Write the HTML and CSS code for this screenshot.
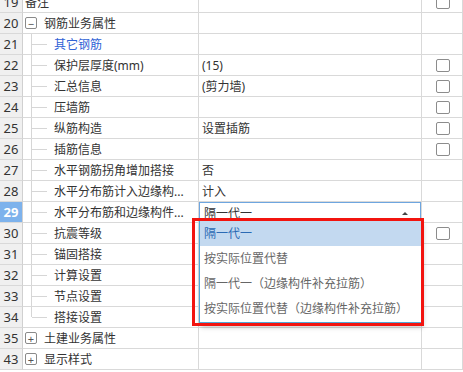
FILE: index.html
```html
<!DOCTYPE html>
<html lang="zh-CN">
<head>
    <meta charset="UTF-8">
    <title>属性编辑</title>
    <link rel="stylesheet" href="styles.css">
</head>
<body>
    <div class="grid">
        <div class="row">
            <div class="num">19</div>
            <div class="name top">备注</div>
            <div class="val"></div>
            <div class="chk"><span class="box"></span></div>
        </div>
        <div class="row">
            <div class="num">20</div>
            <div class="name top"><span class="toggle">&minus;</span>钢筋业务属性</div>
            <div class="val"></div>
            <div class="chk"></div>
        </div>
        <div class="row">
            <div class="num">21</div>
            <div class="name child link">其它钢筋</div>
            <div class="val"></div>
            <div class="chk"></div>
        </div>
        <div class="row">
            <div class="num">22</div>
            <div class="name child">保护层厚度(mm)</div>
            <div class="val">(15)</div>
            <div class="chk"><span class="box"></span></div>
        </div>
        <div class="row">
            <div class="num">23</div>
            <div class="name child">汇总信息</div>
            <div class="val">(剪力墙)</div>
            <div class="chk"><span class="box"></span></div>
        </div>
        <div class="row">
            <div class="num">24</div>
            <div class="name child">压墙筋</div>
            <div class="val"></div>
            <div class="chk"><span class="box"></span></div>
        </div>
        <div class="row">
            <div class="num">25</div>
            <div class="name child">纵筋构造</div>
            <div class="val">设置插筋</div>
            <div class="chk"><span class="box"></span></div>
        </div>
        <div class="row">
            <div class="num">26</div>
            <div class="name child">插筋信息</div>
            <div class="val"></div>
            <div class="chk"><span class="box"></span></div>
        </div>
        <div class="row">
            <div class="num">27</div>
            <div class="name child">水平钢筋拐角增加搭接</div>
            <div class="val">否</div>
            <div class="chk"></div>
        </div>
        <div class="row">
            <div class="num">28</div>
            <div class="name child">水平分布筋计入边缘构...</div>
            <div class="val">计入</div>
            <div class="chk"></div>
        </div>
        <div class="row">
            <div class="num current">29</div>
            <div class="name child">水平分布筋和边缘构件...</div>
            <div class="val editing">
                <div class="combo">隔一代一<span class="arrow"></span></div>
            </div>
            <div class="chk"></div>
        </div>
        <div class="row">
            <div class="num">30</div>
            <div class="name child">抗震等级</div>
            <div class="val"></div>
            <div class="chk"><span class="box"></span></div>
        </div>
        <div class="row">
            <div class="num">31</div>
            <div class="name child">锚固搭接</div>
            <div class="val"></div>
            <div class="chk"></div>
        </div>
        <div class="row">
            <div class="num">32</div>
            <div class="name child">计算设置</div>
            <div class="val"></div>
            <div class="chk"></div>
        </div>
        <div class="row">
            <div class="num">33</div>
            <div class="name child">节点设置</div>
            <div class="val"></div>
            <div class="chk"></div>
        </div>
        <div class="row">
            <div class="num">34</div>
            <div class="name child last">搭接设置</div>
            <div class="val"></div>
            <div class="chk"></div>
        </div>
        <div class="row">
            <div class="num">35</div>
            <div class="name top"><span class="toggle">+</span>土建业务属性</div>
            <div class="val"></div>
            <div class="chk"></div>
        </div>
        <div class="row">
            <div class="num">43</div>
            <div class="name top"><span class="toggle">+</span>显示样式</div>
            <div class="val"></div>
            <div class="chk"></div>
        </div>

        <!-- open dropdown of row 29 -->
        <ul class="dropdown">
            <li class="selected">隔一代一</li>
            <li>按实际位置代替</li>
            <li>隔一代一（边缘构件补充拉筋）</li>
            <li>按实际位置代替（边缘构件补充拉筋）</li>
        </ul>
        <div class="mark"></div>
    </div>
</body>
</html>
```

FILE: styles.css
```css
body {
    margin: 0;
    padding: 0;
    background-color: #ffffff;
    font-family: "Noto Sans", "Noto Sans CJK SC", sans-serif;
    font-size: 12px;
    color: #333;
    overflow: hidden;
}

.grid {
    position: relative;
    margin-top: -8px;
    width: 463px;
}

.row {
    display: grid;
    grid-template-columns: 23px 176px 223px 41px;
    height: 21px;
}

.row > div {
    box-sizing: border-box;
    border-right: 1px solid #d9d9d9;
    border-bottom: 1px solid #d9d9d9;
    display: flex;
    align-items: center;
    white-space: nowrap;
    overflow: hidden;
}

.num {
    justify-content: center;
    background-color: #f0f0f0;
    font-size: 13px;
    color: #333;
    border-right-color: #d0d0d0 !important;
}

.num.current {
    background-color: #7db2ec;
    color: #ffffff;
    font-weight: bold;
}

.name.top {
    padding-left: 2px;
}

.toggle {
    box-sizing: border-box;
    width: 12px;
    height: 12px;
    margin-right: 7px;
    border: 1px solid #8a8a8a;
    border-radius: 2px;
    display: flex;
    align-items: center;
    justify-content: center;
    font-size: 11px;
    line-height: 1;
    color: #555;
}

.name.child {
    position: relative;
    padding-left: 31px;
}

.name.child::before {
    content: "";
    position: absolute;
    left: 8px;
    top: 0;
    bottom: -1px;
    border-left: 1px solid #d6d6d6;
}

.name.child.last::before {
    bottom: 10px;
}

.name.child::after {
    content: "";
    position: absolute;
    left: 9px;
    top: 10px;
    width: 15px;
    border-top: 1px solid #d6d6d6;
}

.name.link {
    color: #2f62d6;
}

.val {
    padding-left: 3px;
}

.val.editing {
    padding: 0;
    align-items: stretch;
    border-bottom: none !important;
}

.combo {
    position: relative;
    flex: 1;
    margin: 0 0 -1px 0;
    border: 1px solid #6ea6e0;
    padding-left: 4px;
    display: flex;
    align-items: center;
    background: #fff;
}

.arrow {
    position: absolute;
    right: 12px;
    top: 9px;
    width: 0;
    height: 0;
    border-left: 3px solid transparent;
    border-right: 3px solid transparent;
    border-bottom: 3px solid #444;
}

.chk {
    justify-content: center;
    padding-left: 1px;
}

.box {
    box-sizing: border-box;
    width: 14px;
    height: 13px;
    border: 1px solid #8c8c8c;
    border-radius: 2px;
    background: #fff;
}

.dropdown {
    position: absolute;
    left: 199px;
    top: 229px;
    width: 222px;
    box-sizing: border-box;
    margin: 0;
    padding: 0 0 1px 0;
    list-style: none;
    background: #ffffff;
    border-left: 1px solid #4ea8d8;
    border-bottom: 2px solid #4ea8d8;
    box-shadow: 2px 3px 5px rgba(0, 0, 0, 0.25);
}

.dropdown li {
    height: 25px;
    line-height: 25px;
    padding-left: 4px;
    color: #666;
    white-space: nowrap;
}

.dropdown li.selected {
    background-color: #c3d9f0;
    color: #2a6ab4;
}

.mark {
    position: absolute;
    left: 192px;
    top: 226px;
    width: 226px;
    height: 102px;
    border: 3px solid #f2140f;
    pointer-events: none;
}
```
